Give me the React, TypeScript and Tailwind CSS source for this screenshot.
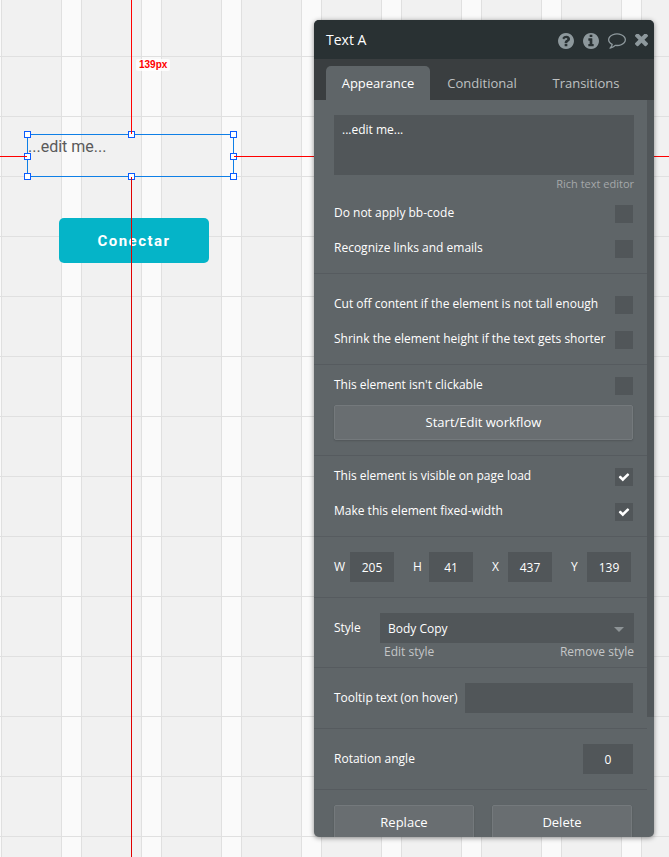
import React, { useState } from "react";
import clsx from "clsx";

const ICONS = {
  help: {
    box: "128 128 1536 1536",
    d: "M1024 1376v-192q0-14-9-23t-23-9h-192q-14 0-23 9t-9 23v192q0 14 9 23t23 9h192q14 0 23-9t9-23zm256-672q0-88-55.5-163t-138.5-116-170-41q-243 0-371 213-15 24 8 42l132 100q7 6 19 6 16 0 25-12 53-68 86-92 34-24 86-24 48 0 85.5 26t37.5 59q0 38-20 61t-68 45q-63 28-115.5 86.5t-52.5 125.5v36q0 14 9 23t23 9h192q14 0 23-9t9-23q0-19 21.5-49.5t54.5-49.5q32-18 49-28.5t46-35 44.5-48 28-60.5 12.5-81zm384 192q0 209-103 385.5t-279.5 279.5-385.5 103-385.5-103-279.5-279.5-103-385.5 103-385.5 279.5-279.5 385.5-103 385.5 103 279.5 279.5 103 385.5z",
  },
  info: {
    box: "128 128 1536 1536",
    d: "M1152 1376v-160q0-14-9-23t-23-9h-96v-512q0-14-9-23t-23-9h-320q-14 0-23 9t-9 23v160q0 14 9 23t23 9h96v320h-96q-14 0-23 9t-9 23v160q0 14 9 23t23 9h448q14 0 23-9t9-23zm-128-896v-160q0-14-9-23t-23-9h-192q-14 0-23 9t-9 23v160q0 14 9 23t23 9h192q14 0 23-9t9-23zm640 416q0 209-103 385.5t-279.5 279.5-385.5 103-385.5-103-279.5-279.5-103-385.5 103-385.5 279.5-279.5 385.5-103 385.5 103 279.5 279.5 103 385.5z",
  },
  comment: {
    box: "0 128 1792 1792",
    d: "M896 384q-204 0-381.5 69.5t-282 187.5-104.5 255q0 112 71.5 213.5t201.5 175.5l87 50-27 96q-24 91-70 172 152-63 275-171l43-38 57 6q69 8 130 8 204 0 381.5-69.5t282-187.5 104.5-255-104.5-255-282-187.5-381.5-69.5zm896 512q0 174-120 321.5t-326 233-450 85.5q-70 0-145-8-198 175-460 242-49 14-114 22h-5q-15 0-27-10.5t-16-27.5v-1q-3-4-.5-12t2-10 4.5-9.5l6-9 7-8.5 8-9q7-8 31-34.5t34.5-38 31-39.5 32.5-51 27-59 26-76q-157-89-247.5-220t-90.5-281q0-174 120-321.5t326-233 450-85.5 450 85.5 326 233 120 321.5z",
  },
  close: {
    box: "302 434 1188 1188",
    d: "M1490 1322q0 40-28 68l-136 136q-28 28-68 28t-68-28l-294-294-294 294q-28 28-68 28t-68-28l-136-136q-28-28-28-68t28-68l294-294-294-294q-28-28-28-68t28-68l136-136q28-28 68-28t68 28l294 294 294-294q28-28 68-28t68 28l136 136q28 28 28 68t-28 68l-294 294 294 294q28 28 28 68z",
  },
  check: {
    box: "0 0 1792 1792",
    d: "M1671 566q0 40-28 68l-724 724-136 136q-28 28-68 28t-68-28l-136-136-362-362q-28-28-28-68t28-68l136-136q28-28 68-28t68 28l294 295 656-657q28-28 68-28t68 28l136 136q28 28 28 68z",
  },
};

function Icon({ name, className }: { name: keyof typeof ICONS; className: string }) {
  return (
    <svg viewBox={ICONS[name].box} className={className} fill="currentColor" aria-hidden="true">
      <path d={ICONS[name].d} />
    </svg>
  );
}

function Section({ className, children }: { className?: string; children: React.ReactNode }) {
  return (
    <section className={clsx("border-b border-[#565b5f] pl-5 pb-[15px]", className)}>
      {children}
    </section>
  );
}

function CheckRow({ label, checked = false }: { label: string; checked?: boolean }) {
  const [on, setOn] = useState(checked);
  return (
    <label className="flex h-[18px] items-start justify-between leading-4">
      <span className="whitespace-nowrap">{label}</span>
      <span className="relative flex size-[18px] items-center justify-center bg-[#515659]">
        <input
          type="checkbox"
          checked={on}
          onChange={() => setOn(!on)}
          className="absolute inset-0 size-full appearance-none"
        />
        {on && <Icon name="check" className="size-3 text-white" />}
      </span>
    </label>
  );
}

function NumberField({ label, value }: { label: string; value: string }) {
  return (
    <label className="flex items-center">
      <span className="w-4">{label}</span>
      <input
        defaultValue={value}
        className="h-[30px] w-11 bg-[#515659] text-center outline-none"
      />
    </label>
  );
}

function PanelButton({ className, children }: { className?: string; children: React.ReactNode }) {
  return (
    <button
      type="button"
      className={clsx(
        "h-[35px] rounded-[2px] border border-[#74797c] bg-[#696e71] shadow-[0_1px_2px_rgba(0,0,0,0.15)]",
        className,
      )}
    >
      {children}
    </button>
  );
}

function Panel() {
  const tabs = ["Appearance", "Conditional", "Transitions"];
  const [active, setActive] = useState(tabs[0]);
  return (
    <aside className="absolute inset-y-5 right-[15px] flex w-[340px] flex-col overflow-hidden rounded-[5px] bg-[#5f6568] text-[13px] text-white shadow-[0_1px_5px_rgba(0,0,0,0.45)]">
      <header className="flex h-[39px] shrink-0 items-center justify-between bg-[#293133] pl-3">
        <h1 className="text-sm">Text A</h1>
        <div className="flex pt-0.5 text-[#8d989c]">
          <button type="button" aria-label="Help" className="flex w-[25px] items-center justify-start pl-1">
            <Icon name="help" className="size-4" />
          </button>
          <button type="button" aria-label="Info" className="flex w-[25px] items-center justify-start pl-1">
            <Icon name="info" className="size-4" />
          </button>
          <button type="button" aria-label="Comment" className="flex w-[25px] items-center justify-center">
            <Icon name="comment" className="size-[18px]" />
          </button>
          <button type="button" aria-label="Close" className="flex w-[25px] items-center justify-center">
            <Icon name="close" className="size-[13px]" />
          </button>
        </div>
      </header>

      <nav className="flex h-[41px] shrink-0 items-end bg-[#3a3e40] px-3">
        {tabs.map((tab) => (
          <button
            key={tab}
            type="button"
            onClick={() => setActive(tab)}
            className={clsx(
              "h-[34px] w-[104px] rounded-t-[5px] pt-0.5",
              tab === active ? "bg-[#5f6568] text-white" : "text-[#bfc1c2]",
            )}
          >
            {tab}
          </button>
        ))}
      </nav>

      <div className="flex min-h-0 flex-1">
        <div className="min-w-0 flex-1 overflow-hidden">
          <Section className="pt-[15px] pr-[13px]">
            <textarea
              aria-label="Text content"
              defaultValue="...edit me..."
              className="block h-[60px] w-full resize-none bg-[#515659] px-2 py-1.5 text-xs leading-[18px] outline-none"
            />
            <div className="flex h-[18px] justify-end">
              <a href="#rich" className="text-[11px] leading-[18px] text-[#a5a8aa]">
                Rich text editor
              </a>
            </div>
            <div className="flex flex-col gap-[17px] pt-3 pr-px text-xs">
              <CheckRow label="Do not apply bb-code" />
              <CheckRow label="Recognize links and emails" />
            </div>
          </Section>

          <Section className="pt-[22px] pr-[14px]">
            <div className="flex flex-col gap-[17px] text-xs">
              <CheckRow label="Cut off content if the element is not tall enough" />
              <CheckRow label="Shrink the element height if the text gets shorter" />
            </div>
          </Section>

          <Section className="flex flex-col gap-2.5 pt-3 pr-[14px] text-xs">
            <CheckRow label="This element isn't clickable" />
            <PanelButton className="w-full text-[13px]">Start/Edit workflow</PanelButton>
          </Section>

          <Section className="flex flex-col gap-[17px] pt-3 pr-[14px] text-xs">
            <CheckRow label="This element is visible on page load" checked />
            <CheckRow label="Make this element fixed-width" checked />
          </Section>

          <Section className="flex justify-between pt-[15px] pr-4 text-xs">
            <NumberField label="W" value="205" />
            <NumberField label="H" value="41" />
            <NumberField label="X" value="437" />
            <NumberField label="Y" value="139" />
          </Section>

          <section className="flex border-b border-[#565b5f] pt-[15px] pr-[13px] pb-1.5 pl-5 text-xs">
            <label htmlFor="style" className="w-[46px] leading-[30px]">
              Style
            </label>
            <div className="flex-1">
              <div className="relative">
                <select
                  id="style"
                  className="block h-[30px] w-full appearance-none bg-[#515659] px-2 pt-0.5 outline-none"
                >
                  <option>Body Copy</option>
                </select>
                <svg
                  viewBox="0 0 10 5"
                  className="pointer-events-none absolute top-[14px] right-2.5 h-[5px] w-2.5 text-[#8d9396]"
                  aria-hidden="true"
                >
                  <path d="M0 0h10L5 5z" fill="currentColor" />
                </svg>
              </div>
              <div className="flex justify-between pl-1 leading-[18px] text-[#c4c6c7]">
                <a href="#edit">Edit style</a>
                <a href="#remove">Remove style</a>
              </div>
            </div>
          </section>

          <Section className="pt-[15px] pr-[14px] text-xs">
            <label className="flex items-center justify-between">
              <span>Tooltip text (on hover)</span>
              <input className="h-[30px] w-[168px] bg-[#515659] px-2 outline-none" />
            </label>
          </Section>

          <Section className="pt-[15px] pr-[14px] text-xs">
            <label className="flex items-center justify-between">
              <span>Rotation angle</span>
              <input
                defaultValue="0"
                className="h-[30px] w-[50px] bg-[#515659] text-center outline-none"
              />
            </label>
          </Section>

          <div className="grid grid-cols-2 gap-[18px] pt-[15px] pr-[15px] pl-5">
            <PanelButton>Replace</PanelButton>
            <PanelButton>Delete</PanelButton>
          </div>
        </div>
        <div className="w-[7px]">
          <div className="h-[83.7%] bg-[#515659]" />
        </div>
      </div>
    </aside>
  );
}

const HANDLES = [
  "-left-1 -top-1",
  "left-[100px] -top-1",
  "-right-1 -top-1",
  "-left-1 top-[18px]",
  "-right-1 top-[18px]",
  "-left-1 -bottom-1",
  "left-[100px] -bottom-1",
  "-right-1 -bottom-1",
];

function Canvas() {
  return (
    <>
      <button
        type="button"
        className="absolute top-[218px] left-[59px] h-[45px] w-[150px] rounded-[5px] bg-[#05b4c8] pt-0.5 font-[Roboto] text-[15px] font-bold tracking-widest text-white"
      >
        Conectar
      </button>

      <div className="absolute top-[134px] left-[27px] h-[43px] w-[207px] border border-[#0f7fe6] font-[Roboto] text-base font-normal text-[#5a5a5a]">
        <p className="leading-6">...edit me...</p>
        {HANDLES.map((place) => (
          <span key={place} className={clsx("absolute size-[7px] border border-[#0a5cff] bg-white", place)} />
        ))}
      </div>

      <div className="absolute top-0 left-[131px] h-[134px] w-px bg-[#f00]" />
      <div className="absolute top-[177px] bottom-0 left-[131px] w-px bg-[#e00000]" />
      <div className="absolute top-[156px] left-0 h-px w-[27px] bg-[#f00]" />
      <div className="absolute top-[156px] right-0 left-[234px] h-px bg-[#f00]" />
      <span className="absolute top-[59px] left-[136px] rounded-[2px] bg-white/80 px-[3px] font-['Liberation_Sans'] text-[10px] leading-3 font-bold text-[#f00]">
        139px
      </span>
    </>
  );
}

export default function App() {
  return (
    <main className="relative min-h-screen overflow-hidden bg-[linear-gradient(transparent_56px,#e0e0e0_56px,#e0e0e0_57px,transparent_57px),linear-gradient(90deg,#fafafa_1px,#e0e0e0_1px,#e0e0e0_2px,#f1f1f1_2px,#f1f1f1_61px,#e0e0e0_61px,#e0e0e0_62px,#fafafa_62px)] bg-[length:80px_60px] font-['Open_Sans',sans-serif]">
      <Canvas />
      <Panel />
    </main>
  );
}
